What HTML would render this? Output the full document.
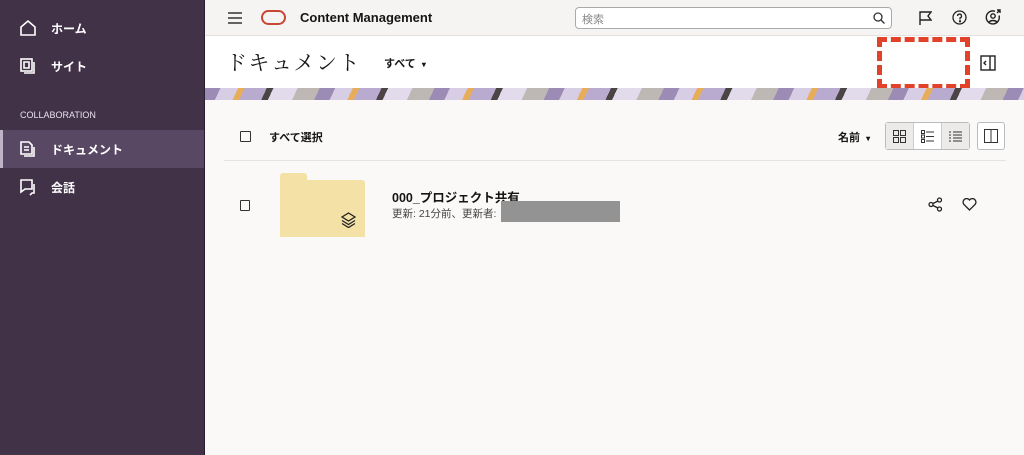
<!DOCTYPE html>
<html><head><meta charset="utf-8"><style>
*{box-sizing:border-box;margin:0;padding:0}
body{width:1024px;height:455px;overflow:hidden;font-family:"Liberation Sans","Noto Sans CJK JP",sans-serif;background:#fbf9f8;position:relative;color:#161513}
.side{position:absolute;left:0;top:0;width:205px;height:455px;background:#423248;color:#fff;border-right:1px solid #2a1f30}
.side .it{position:absolute;left:0;width:204px;height:38px;display:flex;align-items:center;font-size:12px;font-weight:bold}
.side .it svg{position:absolute;left:19px}
.side .it span{position:absolute;left:51px}
.sel{background:#594864;border-left:3px solid #bfb4c7}
.top{position:absolute;left:205px;top:0;width:819px;height:36px;background:#f5f4f2;border-bottom:1px solid #e4e1dd}
.hdr{position:absolute;left:205px;top:36px;width:819px;height:52px;background:#fff}
.banner{position:absolute;left:205px;top:88px;width:819px;height:12px;background:repeating-linear-gradient(115deg,#9c8bb5 0 14px,#d7cde4 14px 30px,#e8ad5a 30px 36px,#b9abcf 36px 56px,#4a4444 56px 62px,#e2dbec 62px 84px,#bdb8b4 84px 104px)}
.abs{position:absolute}
</style></head><body>
<div class="side">
 <div class="it" style="top:9px"><svg width="18" height="18" viewBox="0 0 18 18" fill="none" stroke="#fff" stroke-width="1.6"><path d="M2 8 9 2l7 6v8H2z"/></svg><span>ホーム</span></div>
 <div class="it" style="top:47px"><svg width="18" height="18" viewBox="0 0 18 18" fill="none" stroke="#fff" stroke-width="1.6"><rect x="2" y="2" width="11" height="12"/><path d="M5 5h5v6H5zM15 5v11H5"/></svg><span>サイト</span></div>
 <div class="abs" style="left:20px;top:110px;font-size:9px;color:#e8e0ee">COLLABORATION</div>
 <div class="it sel" style="top:130px"><svg width="18" height="18" viewBox="0 0 18 18" fill="none" stroke="#fff" stroke-width="1.6" style="left:16px"><path d="M2 2h8l3 3v9H2zM5 7h5M5 10h5M15 7v9H5"/></svg><span style="left:48px">ドキュメント</span></div>
 <div class="it" style="top:168px"><svg width="18" height="18" viewBox="0 0 18 18" fill="none" stroke="#fff" stroke-width="1.6"><path d="M2 2h11v9H6l-4 3zM15 6v9h-2l-2 2"/></svg><span>会話</span></div>
</div>
<div class="top">
 <svg class="abs" style="left:23px;top:12px" width="14" height="12" viewBox="0 0 14 12" stroke="#333" stroke-width="1.4"><path d="M0 1h14M0 6h14M0 11h14"/></svg>
 <div class="abs" style="left:56px;top:10px;width:25px;height:15px;border:2.5px solid #c74634;border-radius:8px"></div>
 <div class="abs" style="left:95px;top:10px;font-size:13px;font-weight:bold">Content Management</div>
 <div class="abs" style="left:370px;top:7px;width:317px;height:22px;background:#fff;border:1px solid #aaa;border-radius:4px;font-size:11px;color:#888;padding:3px 6px">検索
  <svg class="abs" style="right:6px;top:4px" width="12" height="12" viewBox="0 0 12 12" fill="none" stroke="#333" stroke-width="1.3"><circle cx="5" cy="5" r="4"/><path d="M8 8l3.5 3.5"/></svg></div>
 <svg class="abs" style="left:714px;top:11px" width="13" height="14" viewBox="0 0 13 14" fill="none" stroke="#222" stroke-width="1.4"><path d="M1 14V1h11l-3 4 3 4H1"/></svg>
 <svg class="abs" style="left:747px;top:10px" width="15" height="15" viewBox="0 0 15 15" fill="none" stroke="#222" stroke-width="1.3"><circle cx="7.5" cy="7.5" r="6.5"/><path d="M5.5 6a2 2 0 1 1 2.5 2v1.5"/><circle cx="8" cy="11.3" r=".5" fill="#222"/></svg>
 <svg class="abs" style="left:780px;top:9px" width="17" height="17" viewBox="0 0 17 17" fill="none" stroke="#222" stroke-width="1.4"><path d="M14 6.5A6.5 6.5 0 1 1 10 2.3"/><circle cx="8" cy="7" r="2.2"/><path d="M4 13c2-2 6-2 8 0M12 1h3v3M15 1l-3 3"/></svg>
</div>
<div class="hdr">
 <div class="abs" style="left:21px;top:11px;font-size:21px;font-family:'Noto Serif CJK SC',serif;letter-spacing:1.5px">ドキュメント</div>
 <div class="abs" style="left:179px;top:19px;font-size:11px;font-weight:bold">すべて &nbsp;<span style="font-size:8px">▾</span></div>
 <div class="abs" style="left:672px;top:1px;width:93px;height:52px;border:5px dashed #e2422a"></div>
 <svg class="abs" style="left:775px;top:19px" width="16" height="16" viewBox="0 0 16 16" fill="none" stroke="#222" stroke-width="1.4"><rect x="1" y="1" width="14" height="14"/><path d="M10 1v14M6 6l-2 2 2 2"/></svg>
</div>
<div class="banner"></div>
<div class="abs" style="left:240px;top:131px;width:11px;height:11px;border:1.3px solid #333;border-radius:1px"></div>
<div class="abs" style="left:269px;top:129px;font-size:11px;font-weight:bold">すべて選択</div>
<div class="abs" style="left:838px;top:129px;font-size:11px;font-weight:bold">名前 &nbsp;<span style="font-size:8px">▾</span></div>
<div class="abs" style="left:885px;top:122px;width:85px;height:28px;border:1px solid #bbb;border-radius:3px;background:#fff;display:flex">
 <div style="width:28px;background:#ecebe9;border-right:1px solid #ccc;display:flex;align-items:center;justify-content:center"><svg width="13" height="13" viewBox="0 0 13 13" fill="none" stroke="#333"><rect x=".5" y=".5" width="5" height="5"/><rect x="7.5" y=".5" width="5" height="5"/><rect x=".5" y="7.5" width="5" height="5"/><rect x="7.5" y="7.5" width="5" height="5"/></svg></div>
 <div style="width:28px;border-right:1px solid #ccc;display:flex;align-items:center;justify-content:center"><svg width="13" height="13" viewBox="0 0 13 13" fill="none" stroke="#333"><rect x=".5" y=".5" width="3" height="3"/><rect x=".5" y="5" width="3" height="3"/><rect x=".5" y="9.5" width="3" height="3"/><path d="M5 2h8M5 6.5h8M5 11h8"/></svg></div>
 <div style="flex:1;background:#ecebe9;display:flex;align-items:center;justify-content:center"><svg width="13" height="11" viewBox="0 0 13 11" stroke="#333"><path d="M0 1h2M4 1h9M0 4h2M4 4h9M0 7h2M4 7h9M0 10h2M4 10h9"/></svg></div>
</div>
<div class="abs" style="left:977px;top:122px;width:28px;height:28px;border:1px solid #bbb;border-radius:3px;background:#fff;display:flex;align-items:center;justify-content:center"><svg width="14" height="14" viewBox="0 0 14 14" fill="none" stroke="#333"><rect x=".5" y=".5" width="13" height="13"/><path d="M7 0v14"/></svg></div>
<div class="abs" style="left:224px;top:160px;width:782px;height:1px;background:#e6e3df"></div>
<div class="abs" style="left:240px;top:200px;width:10px;height:11px;border:1.3px solid #333;border-radius:1px"></div>
<div class="abs" style="left:280px;top:173px;width:27px;height:10px;background:#f4e1a6;border-radius:3px 3px 0 0"></div>
<div class="abs" style="left:280px;top:180px;width:85px;height:57px;background:#f4e1a6;border-radius:0 3px 0 0"></div>
<svg class="abs" style="left:341px;top:212px" width="15" height="16" viewBox="0 0 15 16" fill="none" stroke="#222" stroke-width="1.3"><path d="M7.5 1 14 5l-6.5 4L1 5zM1 8.5l6.5 4 6.5-4M1 11.5l6.5 4 6.5-4"/></svg>
<div class="abs" style="left:392px;top:187px;font-size:12.5px;font-weight:bold">000_プロジェクト共有</div>
<div class="abs" style="left:392px;top:206px;font-size:10.5px;color:#444">更新: 21分前、更新者:</div>
<div class="abs" style="left:501px;top:201px;width:119px;height:21px;background:#939393"></div>
<svg class="abs" style="left:928px;top:197px" width="15" height="15" viewBox="0 0 15 15" fill="none" stroke="#222" stroke-width="1.3"><circle cx="11.5" cy="3" r="2"/><circle cx="3" cy="7.5" r="2"/><circle cx="11.5" cy="12" r="2"/><path d="M5 6.5l5-2.5M5 8.5l5 2.5"/></svg>
<svg class="abs" style="left:962px;top:198px" width="15" height="13" viewBox="0 0 15 13" fill="none" stroke="#222" stroke-width="1.3"><path d="M7.5 12 1.8 6.3A3.2 3.2 0 0 1 7.5 2a3.2 3.2 0 0 1 5.7 4.3z"/></svg>
</body></html>
